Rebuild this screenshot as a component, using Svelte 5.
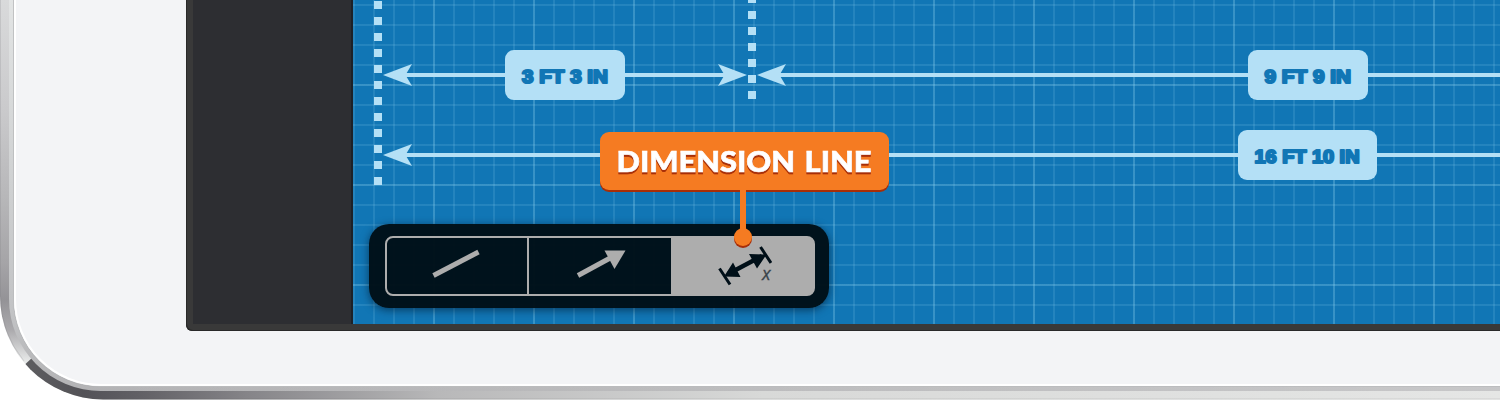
<script>
  const measures = [
    { text: '3 FT 3 IN', x: 505, y: 50, w: 120, tx: 522, tw: 86 },
    { text: '9 FT 9 IN', x: 1248, y: 50, w: 120, tx: 1264.5, tw: 86.5 },
    { text: '16 FT 10 IN', x: 1238, y: 130, w: 139, tx: 1254.5, tw: 105 }
  ];
  const arrows = [
    { x: 383, y: 75, dir: 1 },
    { x: 747, y: 75, dir: -1 },
    { x: 757, y: 75, dir: 1 },
    { x: 383, y: 155, dir: 1 }
  ];
</script>

<main class="device">
  <svg class="edge" viewBox="0 0 1500 400" aria-hidden="true">
    <defs>
      <linearGradient id="side" gradientUnits="userSpaceOnUse" x1="0" y1="0" x2="0" y2="366">
        <stop offset="0" stop-color="#d9dadb" />
        <stop offset=".3" stop-color="#cacacc" />
        <stop offset=".55" stop-color="#b6b6b8" />
        <stop offset=".72" stop-color="#a5a4a7" />
        <stop offset=".82" stop-color="#949397" />
        <stop offset=".9" stop-color="#aaa9ac" />
        <stop offset="1" stop-color="#f0f2f1" />
      </linearGradient>
      <linearGradient id="base" gradientUnits="userSpaceOnUse" x1="25" y1="0" x2="1500" y2="0">
        <stop offset="0" stop-color="#5d5d60" />
        <stop offset=".04" stop-color="#535257" />
        <stop offset=".08" stop-color="#626166" />
        <stop offset=".15" stop-color="#858488" />
        <stop offset=".28" stop-color="#b8b8b9" />
        <stop offset=".5" stop-color="#d8d9d8" />
        <stop offset="1" stop-color="#e5e6e5" />
      </linearGradient>
      <linearGradient id="bevel" x1="0" y1="0" x2="0" y2="1">
        <stop offset="0" stop-color="#e3e5e5" />
        <stop offset=".5" stop-color="#ced0d1" />
        <stop offset=".8" stop-color="#c2c3c5" />
        <stop offset="1" stop-color="#b3b3b5" />
      </linearGradient>
      <linearGradient id="shine" x1="0" y1="0" x2="1" y2="0">
        <stop offset="0" stop-color="#fff" stop-opacity="0" />
        <stop offset="1" stop-color="#fff" stop-opacity=".26" />
      </linearGradient>
      <clipPath id="lower"><path d="M20 369L33 357L110 300H1500V400H20Z" /></clipPath>
    </defs>
    <path d="M0-10V296A103 103.500 0 0 0 103 399.500H1510V-10Z" fill="url(#side)" />
    <path d="M0-10V296A103 103.500 0 0 0 103 399.500H1510V-10Z" fill="url(#base)" clip-path="url(#lower)" />
    <path d="M.5 0V296A103 103 0 0 0 24 361" fill="none" stroke="#77777b" stroke-opacity=".2" />
    <path d="M27 364.500A103 103 0 0 0 103 399H1500" fill="none" stroke="#55555a" stroke-opacity=".15" />
    <path d="M9-10V299A92 92 0 0 0 101 391H1510V-10Z" fill="url(#bevel)" />
    <rect x="100" y="386" width="1400" height="5" fill="url(#shine)" />
    <path d="M13.500-10V299A87.500 87.500 0 0 0 101 386.500H1510V-10Z" fill="#f3f4f6" stroke="#abacad" stroke-opacity=".65" />
    <path d="M15-10V299A86 86 0 0 0 101 385H1510V-10Z" fill="#f3f4f6" stroke="#fff" stroke-width="2" />
  </svg>

  <section class="screen">
    <aside></aside>
    <div class="canvas"></div>
  </section>

  <svg class="drawing" viewBox="0 0 1500 400">
    <g stroke="#b4e0f6" fill="none">
      <path d="M378 1V186" stroke-width="8" stroke-dasharray="8 8" />
      <path d="M752-5V100" stroke-width="8" stroke-dasharray="8 8" />
      <path d="M400 75H730M775 75H1500M400 155H1500" stroke-width="4" />
    </g>
    {#each arrows as a}
      <path transform="translate({a.x} {a.y}) scale({a.dir} 1)" d="M0 0L29-11L22.500 0L29 11Z" fill="#b4e0f6" />
    {/each}
    {#each measures as m}
      <rect x={m.x} y={m.y} width={m.w} height="50" rx="9" fill="#b4e0f6" />
      <text class="measure" x={m.tx} y={m.y + 32.500} textLength={m.tw} lengthAdjust="spacingAndGlyphs">{m.text}</text>
    {/each}
  </svg>

  <nav class="tools">
    <div class="segments">
      <button aria-label="Line">
        <svg viewBox="0 0 60 50"><path d="M6.500 35.500L51.500 12" stroke="#adadad" stroke-width="5" /></svg>
      </button>
      <button aria-label="Arrow">
        <svg viewBox="0 0 60 50">
          <path d="M8 35.500L43 16.500" stroke="#adadad" stroke-width="5" />
          <path d="M34.500 10.500L55.500 10.500L44.500 29Z" fill="#adadad" />
        </svg>
      </button>
      <button class="active" aria-label="Dimension line">
        <svg viewBox="0 0 60 50">
          <path d="M16 34L50 16" stroke="#000f18" stroke-width="4.400" />
          <path d="M7.500 28.500L18 44.500M48.500 7L59 23" stroke="#000f18" stroke-width="3" />
          <path d="M12 36.500L21 22.500L28.500 37ZM54.500 14.500L37 14L45 28.500Z" fill="#000f18" />
          <text x="50" y="40" class="variable">x</text>
        </svg>
      </button>
    </div>
  </nav>

  <svg class="callout" viewBox="0 0 300 130">
    <rect x="5" y="7" width="289" height="58" rx="9" fill="#a72e08" />
    <circle cx="148" cy="112" r="9" fill="#a72e08" />
    <rect x="5" y="5" width="289" height="58" rx="9" fill="#f57b22" />
    <path d="M148 62V111" stroke="#f57b22" stroke-width="6" />
    <circle cx="148" cy="110" r="9" fill="#f57b22" />
    <text class="title" x="21.500" y="44.500" textLength="255" lengthAdjust="spacingAndGlyphs">DIMENSION LINE</text>
  </svg>
</main>

<style>
  :global(body) { margin: 0; background: #fff; }
  .device { position: relative; width: 1500px; height: 400px; overflow: hidden; }
  svg { display: block; }
  .edge, .drawing { position: absolute; top: 0; left: 0; width: 1500px; height: 400px; }
  .screen {
    position: relative;
    box-sizing: border-box;
    display: flex;
    height: 331px;
    margin-left: 186px;
    padding: 0 0 7px 7px;
    background: #393939;
    border-radius: 0 0 0 6px;
    box-shadow: inset 1px -1px 0 #292929;
  }
  aside { box-sizing: border-box; width: 160px; background: #2d2e32; border-right: 2px solid #1d2128; }
  .canvas {
    flex: 1;
    background-color: #1176b5;
    background-image:
      linear-gradient(90deg, rgba(150, 215, 240, .17) 2px, transparent 2px),
      linear-gradient(rgba(150, 215, 240, .17) 2px, transparent 2px),
      linear-gradient(90deg, rgba(150, 215, 240, .15) 2px, transparent 2px),
      linear-gradient(rgba(150, 215, 240, .15) 2px, transparent 2px);
    background-size: 100px 100%, 100% 100px, 20px 100%, 100% 20px;
    background-position: 80px 0, 0 84px, 0 0, 0 4px;
  }
  .measure {
    font: bold 19px "Liberation Sans", Arial, sans-serif;
    fill: #1176b5;
    stroke: #1176b5;
    stroke-width: 2.2;
    stroke-linejoin: round;
  }
  .tools {
    position: absolute;
    left: 369px;
    top: 224px;
    box-sizing: border-box;
    width: 460px;
    height: 84px;
    padding: 12px 14px 12px 16px;
    border-radius: 20px;
    background: rgba(0, 14, 23, .97);
    box-shadow: 0 2px 8px rgba(0, 20, 40, .6);
  }
  .segments {
    box-sizing: border-box;
    display: flex;
    height: 60px;
    border: 2px solid #adadad;
    border-radius: 8px;
  }
  button {
    box-sizing: border-box;
    display: flex;
    justify-content: center;
    width: 142px;
    padding: 0;
    border: 0;
    background: none;
  }
  button:first-child { border-right: 2px solid #adadad; }
  button:last-child { flex: 1; }
  button svg { width: 60px; height: 50px; margin-top: 2px; }
  .active { background: #adadad; border-radius: 0 5px 5px 0; box-shadow: 1px 0 #adadad; }
  .variable { font: italic 18px "Open Sans", sans-serif; fill: #39434a; stroke: #39434a; stroke-width: .3; }
  .callout { position: absolute; left: 595px; top: 127px; width: 300px; height: 130px; }
  .title {
    font: 900 29px Lato, sans-serif;
    fill: #fff;
    stroke: #fff;
    stroke-width: .7;
    word-spacing: 2px;
    filter: drop-shadow(0 2px .5px #a72e08);
  }
</style>
